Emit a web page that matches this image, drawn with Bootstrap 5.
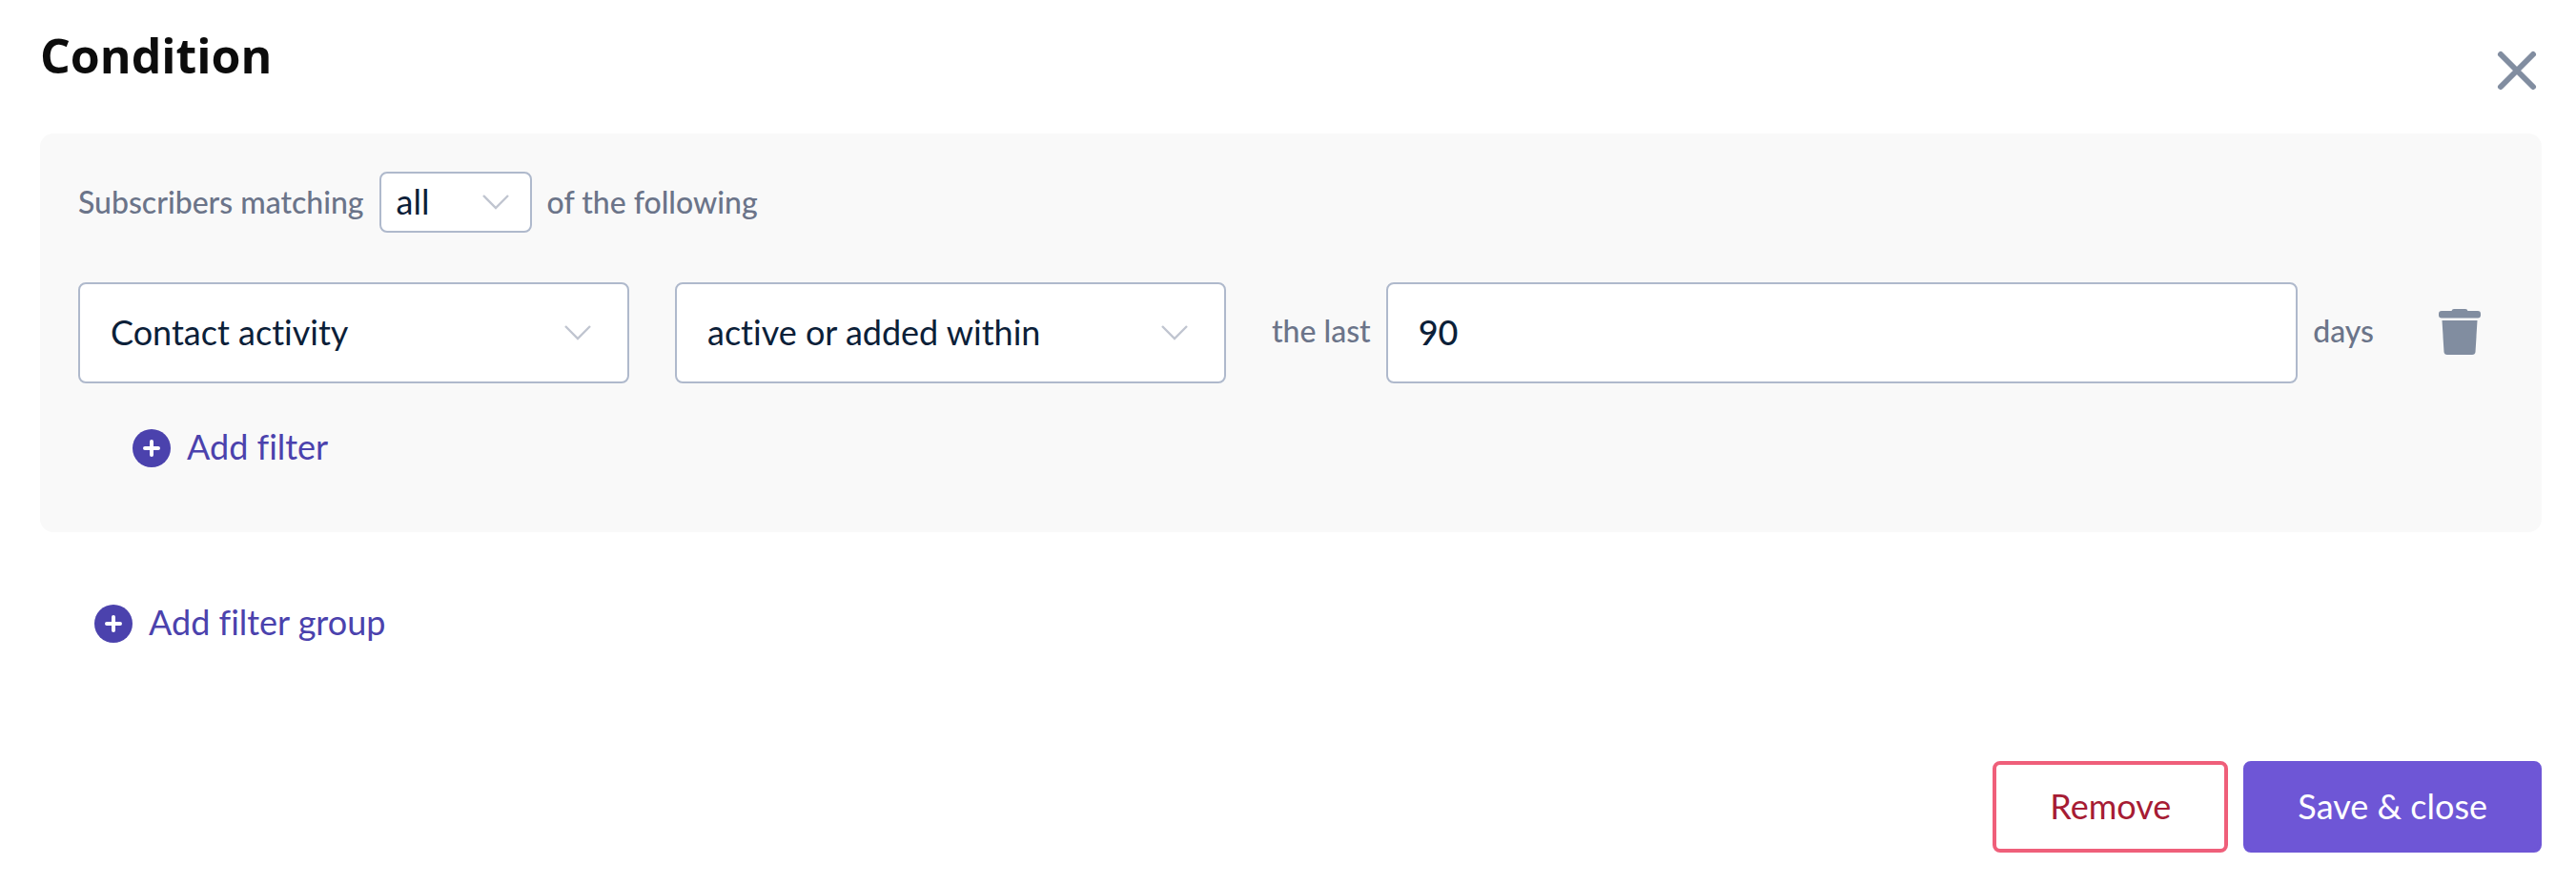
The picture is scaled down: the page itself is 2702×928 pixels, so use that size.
<!DOCTYPE html>
<html lang="en">
<head>
<meta charset="utf-8">
<meta name="viewport" content="width=device-width, initial-scale=1">
<title>Condition</title>
<link rel="stylesheet" href="https://cdn.jsdelivr.net/npm/bootstrap@5.3.0/dist/css/bootstrap.min.css">
<style>
  body { font-family: Lato, "Liberation Sans", sans-serif; font-size: 36px; line-height: 48px; font-variant-ligatures: none; color: #0b2038; background: #fff; }
  .editor { padding: 32px 36px 34px 42px; }
  .editor-title { font-family: "Open Sans", Inter, sans-serif; font-size: 50px; line-height: 52px; font-weight: 700; color: #0c0c0c; }
  .icon-button { border: 0; background: none; padding: 0; line-height: 0; color: #818da0; }
  .icon-delete { padding: 0 24px 0 20px; }
  .filter-group { background: #f9f9f9; border-radius: 14px; padding: 40px 40px 64px; margin: 40px 0 72px; }
  .hint { font-size: 32px; font-weight: 500; color: #6b7489; white-space: nowrap; }
  .field, .field:focus {
    height: 106px; padding: 0 32px 2px; border: 2px solid #afb9cc; border-radius: 8px;
    font-size: 36px; font-weight: 500; line-height: 48px; color: #0b2038; background-color: #fff;
    font-variant-ligatures: none;
  }
  select.field {
    width: 578px; padding-right: 80px; font-weight: 400;
    background-image: url("data:image/svg+xml,%3Csvg xmlns='http://www.w3.org/2000/svg' viewBox='0 0 28 16'%3E%3Cpath d='M1 1L14 14L27 1' fill='none' stroke='%23c0c5d0' stroke-width='2.4'/%3E%3C/svg%3E");
    background-size: 28px 16px; background-position: right 38px center;
  }
  select.field-short { width: 160px; height: 64px; padding: 0 56px 2px 16px; background-position: right 22px center; }
  .filter-row { margin-top: 52px; gap: 48px; }
  .filter-row .hint { padding-bottom: 4px; }
  .add-row { margin-top: 44px; }
  .add-link { gap: 16px; color: #4b42ad; text-decoration: none; }
  .add-link:hover { color: #372f91; }
  .add-link span { padding-bottom: 2px; margin-top: -2px; }
  .actions { margin-top: 120px; }
  .action { height: 96px; border-width: 4px; border-radius: 8px; font-size: 36px; line-height: 48px; }
  .action-remove { padding: 0 56px 2px; --bs-btn-color: #a61c34; --bs-btn-border-color: #ef5f7a; --bs-btn-bg: #fff; --bs-btn-hover-color: #a61c34; --bs-btn-hover-bg: #fff0f3; --bs-btn-hover-border-color: #ef5f7a; }
  .action-save { padding: 0 53px 2px; --bs-btn-color: #fff; --bs-btn-border-color: #6e56d6; --bs-btn-bg: #6e56d6; --bs-btn-hover-color: #fff; --bs-btn-hover-bg: #5b45bd; --bs-btn-hover-border-color: #5b45bd; }
</style>
</head>
<body>
<main class="editor">
  <header class="d-flex justify-content-between align-items-start">
    <h1 class="editor-title m-0">Condition</h1>
    <button type="button" class="icon-button mt-3" aria-label="Close">
      <svg width="52" height="52" viewBox="0 0 52 52" fill="none" stroke="currentColor" stroke-width="6" stroke-linecap="round"><path d="M9 9L43 43M43 9L9 43"/></svg>
    </button>
  </header>

  <form>
    <section class="filter-group">
      <div class="d-flex align-items-center gap-3">
        <label class="hint" for="match">Subscribers matching</label>
        <select class="form-select field field-short" id="match"><option>all</option><option>any</option></select>
        <span class="hint">of the following</span>
      </div>

      <div class="filter-row d-flex align-items-center">
        <select class="form-select field flex-shrink-0" aria-label="Filter"><option>Contact activity</option></select>
        <select class="form-select field flex-shrink-0" aria-label="Rule"><option>active or added within</option></select>
        <div class="d-flex align-items-center flex-grow-1 gap-3">
          <label class="hint" for="days">the last</label>
          <input class="form-control field" type="text" id="days" value="90">
          <span class="hint">days</span>
        </div>
        <button type="button" class="icon-button icon-delete" aria-label="Delete filter">
          <svg width="44" height="50" viewBox="0 0 44 50" fill="currentColor"><path d="M16 0h12q2 0 2.500 2H41q3 0 3 3v1.500Q44 9.500 41 9.500H3Q0 9.500 0 6.500V5q0-3 3-3h10.500Q14 0 16 0z"/><path d="M3.500 12h37l-2 33q-.3 3-3.500 3H9q-3.200 0-3.500-3z"/></svg>
        </button>
      </div>

      <div class="add-row d-flex px-3">
        <a href="#" class="add-link d-flex align-items-center ms-4 ps-3">
          <svg width="42" height="42" viewBox="0 0 42 42"><circle cx="21" cy="21" r="20" fill="#4b42ad"/><path d="M21 14v14M14 21h14" stroke="#fff" stroke-width="4" stroke-linecap="round"/></svg>
          <span>Add filter</span>
        </a>
      </div>
    </section>

    <div class="d-flex px-3">
      <a href="#" class="add-link d-flex align-items-center ms-4 ps-3">
        <svg width="42" height="42" viewBox="0 0 42 42"><circle cx="21" cy="21" r="20" fill="#4b42ad"/><path d="M21 14v14M14 21h14" stroke="#fff" stroke-width="4" stroke-linecap="round"/></svg>
        <span>Add filter group</span>
      </a>
    </div>

    <footer class="actions d-flex justify-content-end gap-3">
      <button type="button" class="btn action action-remove">Remove</button>
      <button type="submit" class="btn action action-save">Save &amp; close</button>
    </footer>
  </form>
</main>
<script src="https://cdn.jsdelivr.net/npm/bootstrap@5.3.0/dist/js/bootstrap.bundle.min.js"></script>
</body>
</html>
